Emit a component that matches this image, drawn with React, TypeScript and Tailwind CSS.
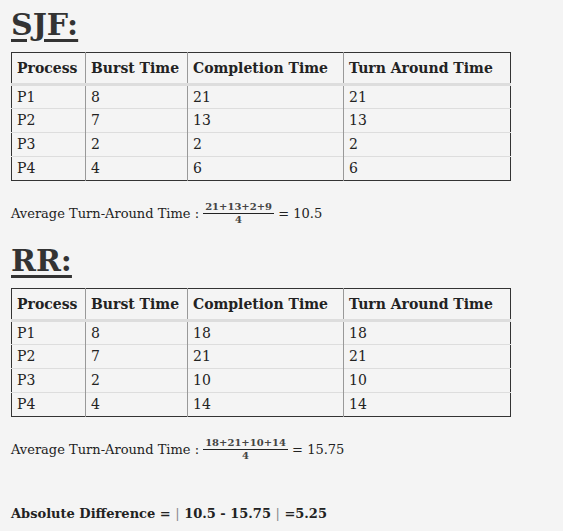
const sjf = [
  ["P1", "8", "21", "21"],
  ["P2", "7", "13", "13"],
  ["P3", "2", "2", "2"],
  ["P4", "4", "6", "6"],
];

const rr = [
  ["P1", "8", "18", "18"],
  ["P2", "7", "21", "21"],
  ["P3", "2", "10", "10"],
  ["P4", "4", "14", "14"],
];

function ProcTable({ rows }: { rows: string[][] }) {
  return (
    <table className="w-[500px] border-collapse border border-[#333] text-[14px] text-[#222]">
      <thead>
        <tr className="h-[32px] border-b-[3px] border-[#ddd] text-left">
          <th className="w-[74px] border-r border-[#999] pl-[5px] font-bold">Process</th>
          <th className="w-[102px] border-r border-[#999] pl-[5px] font-bold">Burst Time</th>
          <th className="w-[156px] border-r border-[#999] pl-[5px] font-bold">Completion Time</th>
          <th className="pl-[5px] font-bold">Turn Around Time</th>
        </tr>
      </thead>
      <tbody>
        {rows.map((r, i) => (
          <tr key={i} className="h-[24px] border-t border-[#ddd]">
            {r.map((c, j) => (
              <td key={j} className={`pl-[5px] ${j < 3 ? "border-r border-[#999]" : ""}`}>
                {c}
              </td>
            ))}
          </tr>
        ))}
      </tbody>
    </table>
  );
}

function Avg({ num, result }: { num: string; result: string }) {
  return (
    <p className="flex items-center text-[13px] text-[#222]">
      <span>Average Turn-Around Time :&nbsp;</span>
      <span className="inline-flex flex-col items-center text-[10px] font-bold leading-[12px] text-[#444]">
        <span className="border-b border-[#222] px-[2px]">{num}</span>
        <span>4</span>
      </span>
      <span>&nbsp;= {result}</span>
    </p>
  );
}

export default function App() {
  return (
    <div className="min-h-[531px] bg-[#f4f4f4] px-[11px] pt-[6px] font-['DejaVu_Serif',Georgia,serif]">
      <h2 className="text-[30px] font-bold leading-[38px] text-[#333] underline decoration-[3px] underline-offset-[4px]">
        SJF:
      </h2>
      <div className="mt-[8px]">
        <ProcTable rows={sjf} />
      </div>
      <div className="mt-[20px]">
        <Avg num="21+13+2+9" result="10.5" />
      </div>
      <h2 className="mt-[16px] text-[30px] font-bold leading-[38px] text-[#333] underline decoration-[3px] underline-offset-[4px]">
        RR:
      </h2>
      <div className="mt-[8px]">
        <ProcTable rows={rr} />
      </div>
      <div className="mt-[20px]">
        <Avg num="18+21+10+14" result="15.75" />
      </div>
      <p className="mt-[42px] text-[13px] font-bold text-[#222]">
        Absolute Difference = <span className="font-normal text-[#888]">|</span> 10.5 - 15.75{" "}
        <span className="font-normal text-[#888]">|</span> =5.25
      </p>
    </div>
  );
}
